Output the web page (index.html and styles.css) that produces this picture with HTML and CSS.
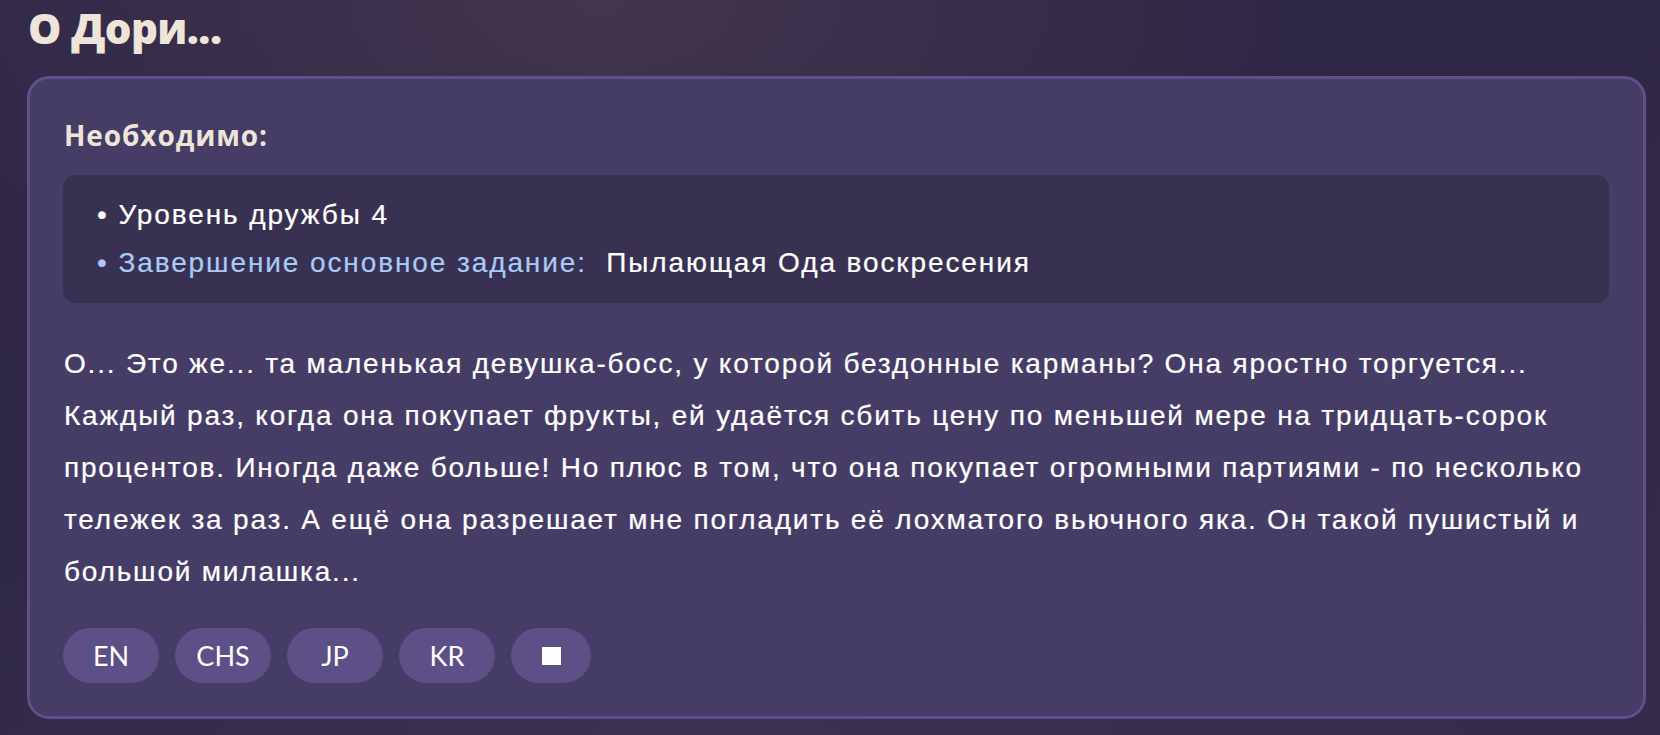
FILE: index.html
```html
<!DOCTYPE html>
<html lang="ru">
<head>
<meta charset="utf-8">
<title>О Дори...</title>
<link rel="stylesheet" href="styles.css">
</head>
<body>
<main class="page">
  <h1 class="title">О Дори...</h1>
  <section class="card">
    <h2 class="label">Необходимо:</h2>
    <ul class="reqs">
      <li class="req">• Уровень дружбы 4</li>
      <li class="req"><span class="req-key">• Завершение основное задание:</span>&nbsp; Пылающая Ода воскресения</li>
    </ul>
    <p class="story">О... Это же... та маленькая девушка-босс, у которой бездонные карманы? Она яростно торгуется... Каждый раз, когда она покупает фрукты, ей удаётся сбить цену по меньшей мере на тридцать-сорок процентов. Иногда даже больше! Но плюс в том, что она покупает огромными партиями - по несколько тележек за раз. А ещё она разрешает мне погладить её лохматого вьючного яка. Он такой пушистый и большой милашка...</p>
    <div class="langs">
      <button class="lang">EN</button>
      <button class="lang">CHS</button>
      <button class="lang">JP</button>
      <button class="lang">KR</button>
      <button class="lang lang-stop"><span class="stop-icon"></span></button>
    </div>
  </section>
</main>
</body>
</html>
```

FILE: styles.css
```css
html, body {
  margin: 0;
  padding: 0;
}

body {
  width: 1660px;
  height: 735px;
  overflow: hidden;
  background:
    radial-gradient(ellipse 700px 380px at 600px 0px, rgba(74, 60, 78, 0.7) 0%, rgba(74, 60, 78, 0) 100%),
    radial-gradient(ellipse 900px 300px at 700px 735px, rgba(70, 60, 90, 0.45) 0%, rgba(70, 60, 90, 0) 100%),
    linear-gradient(160deg, #312849 0%, #2f2746 40%, #352b4a 100%);
  font-family: "Liberation Sans", Arial, sans-serif;
}

.page {
  padding: 3px 14px 0 27px;
}

.title {
  margin: 0 0 23px 1px;
  font-family: "Open Sans", "Noto Sans", sans-serif;
  font-weight: 800;
  font-size: 42px;
  line-height: 50px;
  letter-spacing: -0.6px;
  color: #eee4d9;
}

.card {
  box-sizing: border-box;
  background: #463d66;
  border: 3px solid #5d508c;
  border-radius: 22px;
  padding: 38px 34px 33px 33px;
  height: 643px;
}

.label {
  margin: 0 0 22px 1px;
  font-family: "Open Sans", "Noto Sans", sans-serif;
  font-weight: 700;
  font-size: 28px;
  line-height: 36px;
  letter-spacing: 0.9px;
  color: #eee4d9;
}

.reqs {
  list-style: none;
  margin: 0;
  padding: 16px 34px 16px 34px;
  background: #383152;
  border-radius: 12px;
}

.req {
  font-size: 28px;
  line-height: 48px;
  letter-spacing: 1.9px;
  color: #ffffff;
  -webkit-text-stroke: 0.2px currentColor;
}

.req-key {
  color: #a9caf6;
}

.story {
  margin: 35px 0 0 1px;
  font-size: 28px;
  line-height: 52px;
  letter-spacing: 1.8px;
  color: #ffffff;
  -webkit-text-stroke: 0.2px currentColor;
}

.langs {
  display: flex;
  gap: 16px;
  margin-top: 30px;
}

.lang {
  height: 55px;
  width: 96px;
  border: none;
  border-radius: 28px;
  background: #5c5087;
  color: #ffffff;
  font-family: "Lato", "Inter", sans-serif;
  font-size: 27px;
  padding: 0;
  display: flex;
  align-items: center;
  justify-content: center;
}

.lang-stop {
  width: 80px;
}

.stop-icon {
  display: block;
  width: 19px;
  height: 18px;
  background: #ffffff;
}
```
